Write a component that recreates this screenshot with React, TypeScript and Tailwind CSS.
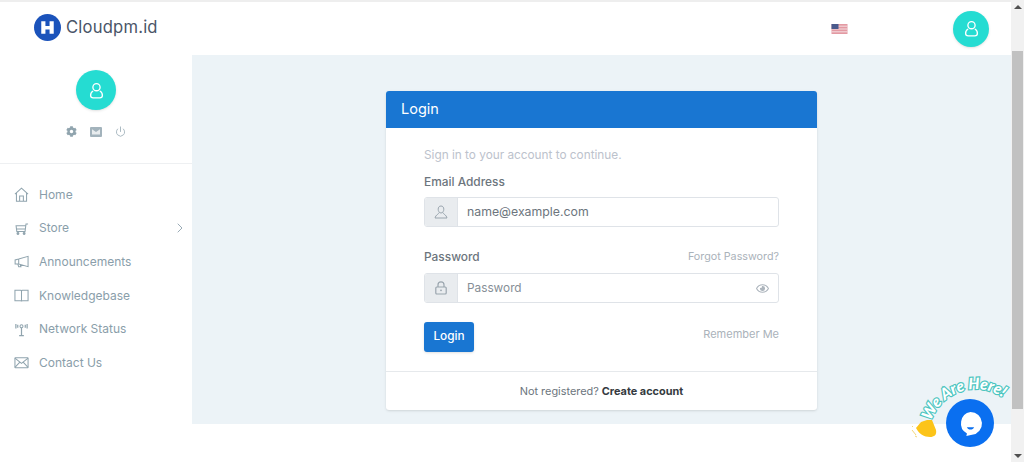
import { ChevronRight, Power } from 'lucide-react';
import type { ReactNode } from 'react';
import { FaCog, FaRegEye } from 'react-icons/fa';

const font = "font-['Inter','Open_Sans',sans-serif]";

function Avatar({ size }: { size: string }) {
  return (
    <div className={`${size} rounded-full bg-[#25dcd2] flex items-center justify-center shadow-sm`}>
      <svg viewBox="0 0 20 20" className="w-[19px] h-[19px]" fill="none" stroke="#fff" strokeWidth="1.4">
        <circle cx="10" cy="6.5" r="3.8" />
        <path d="M6.5 10.5 C4.5 11.5 3.8 13 3.8 15 C3.8 17 4.8 17.8 6.5 17.8 H13.5 C15.2 17.8 16.2 17 16.2 15 C16.2 13 15.5 11.5 13.5 10.5" />
      </svg>
    </div>
  );
}

const iconStroke = { fill: 'none', stroke: '#90a4ae', strokeWidth: 1.1 };

const navItems: { label: string; icon: ReactNode; arrow?: boolean }[] = [
  {
    label: 'Home',
    icon: (
      <svg viewBox="0 0 16 16" className="w-[15px] h-[15px]" {...iconStroke}>
        <path d="M1 7.5 8 1.2l7 6.3M2.6 6.5v8.7h10.8V6.5M6 15.2V9.6h4v5.6" />
      </svg>
    ),
  },
  {
    label: 'Store',
    arrow: true,
    icon: (
      <svg viewBox="0 0 16 16" className="w-[15px] h-[15px]" {...iconStroke}>
        <path d="M15 3.2h-2.2l-1 8H3l-.8-6.2h10.3M3 8.6h8.9" />
        <circle cx="4.2" cy="13.4" r="1" fill="#90a4ae" />
        <circle cx="10.8" cy="13.4" r="1" fill="#90a4ae" />
      </svg>
    ),
  },
  {
    label: 'Announcements',
    icon: (
      <svg viewBox="0 0 16 16" className="w-[15px] h-[15px]" {...iconStroke}>
        <path d="M15 2.5v11L5 10.6H1.2V6.4L5 5.4ZM5 5.4v5.2M4 10.6l1 3h2.4l-.8-2.5" />
      </svg>
    ),
  },
  {
    label: 'Knowledgebase',
    icon: (
      <svg viewBox="0 0 16 16" className="w-[15px] h-[15px]" {...iconStroke}>
        <path d="M1 2.5h6c.6 0 1 .4 1 1 0-.6.4-1 1-1h6v11H9c-.6 0-1 .3-1 1 0-.7-.4-1-1-1H1ZM8 3.5v11" />
      </svg>
    ),
  },
  {
    label: 'Network Status',
    icon: (
      <svg viewBox="0 0 16 16" className="w-[15px] h-[15px]" {...iconStroke}>
        <circle cx="8" cy="4.5" r="1.6" />
        <path d="M8 6.1V14.5M5.5 14.5h5M2 2.2v4.6M4 2.8v3.4M14 2.2v4.6M12 2.8v3.4" strokeWidth="1.3" />
      </svg>
    ),
  },
  {
    label: 'Contact Us',
    icon: (
      <svg viewBox="0 0 16 16" className="w-[15px] h-[15px]" {...iconStroke}>
        <rect x="1" y="3" width="14" height="10.5" rx=".5" />
        <path d="m1 3.4 7 5.6 7-5.6M1 13.2l5-5.4M15 13.2l-5-5.4" />
      </svg>
    ),
  },
];

function Sidebar() {
  return (
    <aside className="w-[192px] shrink-0 bg-white flex flex-col">
      <div className="h-[109px] border-b border-[#eef0f2] flex flex-col items-center pt-[15px]">
        <Avatar size="w-10 h-10" />
        <div className="flex items-center gap-[13px] mt-[16px]">
          <FaCog className="w-[11px] h-[11px] text-[#90a4ae]" />
          <svg viewBox="0 0 12 10" className="w-[12px] h-[10px]">
            <rect width="12" height="10" rx="1" fill="#a3b3bc" />
            <path d="M2 2.2v5.4h8V2.2L6 5Z" fill="#fff" opacity=".75" />
          </svg>
          <Power className="w-[11px] h-[11px] text-[#a3b3bc]" />
        </div>
      </div>
      <nav className="pt-[14px] flex flex-col">
        {navItems.map((item) => (
          <div key={item.label} className="h-[33.6px] flex items-center pl-[14px] pr-[4px]">
            <span className="w-[25px] shrink-0 flex items-center">{item.icon}</span>
            <span className="text-[12px] text-[#8a9eaa] flex-1">{item.label}</span>
            {item.arrow && <ChevronRight className="w-[16px] h-[16px] text-[#8a9eaa]" strokeWidth={1.3} />}
          </div>
        ))}
      </nav>
    </aside>
  );
}

function LoginCard() {
  return (
    <div className="w-[431px] h-[319px] bg-white rounded-[3px] shadow-sm flex flex-col overflow-hidden">
      <div className="h-[37px] shrink-0 bg-[#1976d2] flex items-center pl-[15px] pb-[2px] text-[14.5px] text-white">
        Login
      </div>
      <div className="h-[244px] px-[38px] pt-[20px] border-b border-[#e6e9ec]">
        <p className="text-[11.8px] leading-[14px] text-[#bcc2cc]">Sign in to your account to continue.</p>
        <label className="block mt-[13px] text-[11.9px] leading-[14px] font-medium text-[#6c757d]">Email Address</label>
        <div className="mt-[8px] h-[30px] flex border border-[#dfe3e8] rounded-[3px] overflow-hidden">
          <div className="w-[33px] bg-[#e9ecef] flex items-center justify-center border-r border-[#dfe3e8]">
            <svg viewBox="0 0 14 14" className="w-[14px] h-[14px]" fill="none" stroke="#9aa5ae" strokeWidth="1">
              <path d="M7 1C5.2 1 4.2 2.3 4.2 4.2S5.2 8 7 8s2.8-1.9 2.8-3.8S8.8 1 7 1ZM5.2 7.5C5 9 1.5 9.8 1 13h12c-.5-3.2-4-4-4.2-5.5" />
            </svg>
          </div>
          <div className="flex-1 flex items-center pl-[9px] text-[12.3px] text-[#6c757d]">name@example.com</div>
        </div>
        <div className="mt-[23px] flex items-center justify-between">
          <label className="text-[11.9px] leading-[14px] font-medium text-[#6c757d]">Password</label>
          <a className="text-[10.75px] leading-[14px] text-[#aab2ba]">Forgot Password?</a>
        </div>
        <div className="mt-[9px] h-[30px] flex border border-[#dfe3e8] rounded-[3px] overflow-hidden">
          <div className="w-[33px] bg-[#e9ecef] flex items-center justify-center border-r border-[#dfe3e8]">
            <svg viewBox="0 0 14 14" className="w-[14px] h-[14px]" fill="none" stroke="#9aa5ae" strokeWidth="1.2">
              <rect x="1.8" y="6" width="10.4" height="7" rx="1" />
              <path d="M4 6V3.8a3 3 0 0 1 6 0V6" />
              <circle cx="7" cy="9.3" r=".9" fill="#9aa5ae" stroke="none" />
            </svg>
          </div>
          <div className="flex-1 flex items-center justify-between pl-[9px] pr-[9px] pt-[1px] text-[11.8px] text-[#868e96]">
            Password
            <FaRegEye className="w-[13px] h-[13px] text-[#adb5bd]" />
          </div>
        </div>
        <div className="mt-[19px] flex items-center justify-between">
          <button className="w-[50px] h-[30px] bg-[#1976d2] rounded-[3px] shadow-sm text-[11.8px] font-medium text-white">
            Login
          </button>
          <span className="text-[11px] text-[#aab2ba] -mt-[5px]">Remember Me</span>
        </div>
      </div>
      <div className="flex-1 flex items-center justify-center gap-[3px] pt-[1px] text-[10.9px] text-[#6c757d]">
        Not registered? <b className="font-bold text-[#343a40]">Create account</b>
      </div>
    </div>
  );
}

function ChatWidget() {
  return (
    <div className="absolute left-[905px] top-[368px] w-[105px] h-[85px]">
      <svg viewBox="0 0 105 85" className="absolute inset-0 w-full h-full overflow-visible">
        <defs>
          <path id="chat-arc" d="M26 53 C 36 24, 76 6, 108 38" />
        </defs>
        <text
          fontFamily="'Lato', sans-serif"
          fontWeight="900"
          fontSize="15.5"
          fontStyle="italic"
          fill="#ffffff"
          stroke="#4cc5c0"
          strokeWidth="2.4"
          paintOrder="stroke"
        >
          <textPath href="#chat-arc">We Are Here!</textPath>
        </text>
        <path d="M11 60 L16 54 L22 52 L27 52 L31 62 C32 67 29 69 25 69 C19 69 14 66 11 60Z" fill="#fcc419" />
        <path d="M7 62l4 5M8 59l-1-1M10 68l2 1" stroke="#f5d77a" strokeWidth="1" fill="none" />
      </svg>
      <div className="absolute left-[41px] top-[31px] w-[48px] h-[48px] rounded-full bg-[#0a6ff0] flex items-center justify-center">
        <svg viewBox="0 0 24 24" className="w-[25px] h-[25px]">
          <path d="M12 1a11 11 0 0 1 1.5 21.9L8 24l.6-2.5A11 11 0 0 1 12 1Z" fill="#fff" />
          <path d="M8.5 15.5h7c-.6 1.6-2 2.3-3.5 2.3s-2.9-.7-3.5-2.3Z" fill="#0a6ff0" />
        </svg>
      </div>
    </div>
  );
}

function Scrollbar() {
  return (
    <div className="w-[13px] shrink-0 bg-[#f1f1f1] flex flex-col items-center">
      <div className="h-[13px] flex items-center justify-center">
        <div className="w-0 h-0 border-x-[4px] border-x-transparent border-b-[4px] border-b-[#505050]" />
      </div>
      <div className="mt-[38px] w-[11px] h-[358px] bg-[#c1c1c1]" />
      <div className="flex-1 flex items-end justify-center pb-[4px]">
        <div className="w-0 h-0 border-x-[4px] border-x-transparent border-t-[4px] border-t-[#505050]" />
      </div>
    </div>
  );
}

export default function App() {
  return (
    <div className={`${font} relative w-[1024px] h-[462px] overflow-hidden flex bg-white`}>
      <div className="flex-1 flex flex-col min-w-0">
        <header className="h-[55px] shrink-0 border-t-2 border-[#eeeeee] flex items-center justify-between pl-[34px] pr-[22px]">
          <div className="flex items-center gap-[5px] -mt-[2px]">
            <svg viewBox="0 0 26 26" className="w-[27px] h-[27px]">
              <circle cx="13" cy="13" r="13" fill="#1b53bb" />
              <path d="M7 7h4v4.5h4V7h4v12h-4v-4h-4v4H7Z" fill="#fff" />
            </svg>
            <span className="text-[16.6px] text-[#4a5568] tracking-[0.2px]">Cloudpm.id</span>
          </div>
          <div className="flex items-center gap-[105px]">
            <svg viewBox="0 0 16 10" className="w-[17px] h-[10px]">
              <rect width="16" height="10" fill="#e39aa3" />
              <path d="M0 2.2h16M0 5h16M0 7.8h16" stroke="#f4dde0" strokeWidth="1" />
              <rect width="7" height="5" fill="#4a5a8c" />
            </svg>
            <Avatar size="w-9 h-9" />
          </div>
        </header>
        <div className="flex-1 flex min-h-0">
          <Sidebar />
          <div className="flex-1 flex flex-col">
            <main className="h-[369px] bg-[#ecf3f7] pt-[36px] pl-[194px]">
              <LoginCard />
            </main>
          </div>
        </div>
      </div>
      <Scrollbar />
      <ChatWidget />
    </div>
  );
}
